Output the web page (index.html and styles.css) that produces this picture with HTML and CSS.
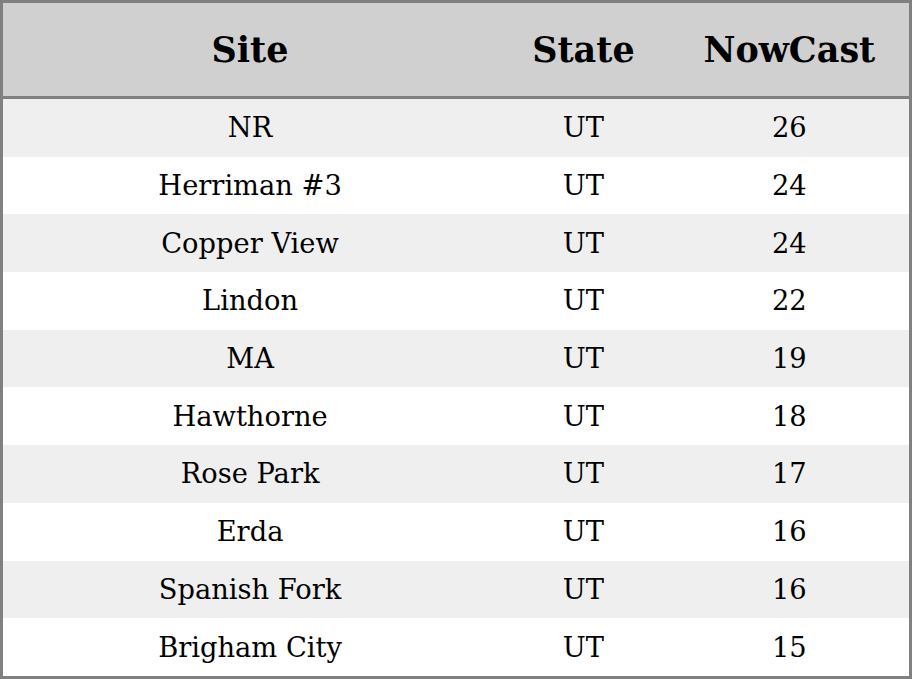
FILE: index.html
```html
<!DOCTYPE html>
<html>
<head>
<meta charset="utf-8">
<link rel="stylesheet" href="styles.css">
</head>
<body>
<table class="aq">
  <colgroup>
    <col class="c-site">
    <col class="c-state">
    <col class="c-now">
  </colgroup>
  <thead>
    <tr><th>Site</th><th>State</th><th>NowCast</th></tr>
  </thead>
  <tbody>
    <tr><td>NR</td><td>UT</td><td>26</td></tr>
    <tr><td>Herriman #3</td><td>UT</td><td>24</td></tr>
    <tr><td>Copper View</td><td>UT</td><td>24</td></tr>
    <tr><td>Lindon</td><td>UT</td><td>22</td></tr>
    <tr><td>MA</td><td>UT</td><td>19</td></tr>
    <tr><td>Hawthorne</td><td>UT</td><td>18</td></tr>
    <tr><td>Rose Park</td><td>UT</td><td>17</td></tr>
    <tr><td>Erda</td><td>UT</td><td>16</td></tr>
    <tr><td>Spanish Fork</td><td>UT</td><td>16</td></tr>
    <tr><td>Brigham City</td><td>UT</td><td>15</td></tr>
  </tbody>
</table>
</body>
</html>
```

FILE: styles.css
```css
html, body {
  margin: 0;
  padding: 0;
  background: #ffffff;
}
.aq {
  width: 912px;
  height: 679px;
  border-collapse: collapse;
  border: 3px solid #808080;
  table-layout: fixed;
  font-family: "DejaVu Serif", serif;
  color: #000;
}
.c-site { width: 494px; }
.c-state { width: 172px; }
.c-now { width: 240px; }
.aq th {
  height: 93px;
  padding: 0;
  background: #d0d0d0;
  font-size: 35px;
  font-weight: bold;
  text-align: center;
  border-bottom: 3px solid #808080;
}
.aq td {
  height: 57.7px;
  padding: 0;
  font-size: 27.3px;
  text-align: center;
}
.aq tbody tr:nth-child(odd) td {
  background: #efefef;
}
```
